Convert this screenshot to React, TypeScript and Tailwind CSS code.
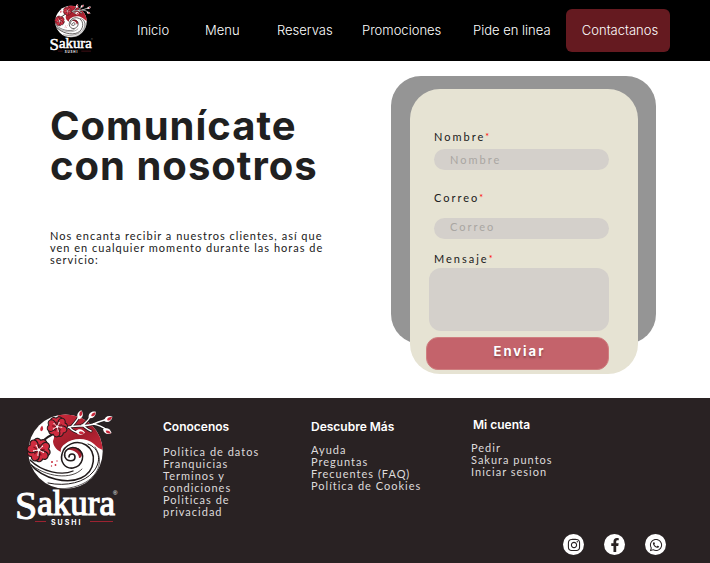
import React from "react";
import { FaFacebookF, FaInstagram, FaWhatsapp } from "react-icons/fa";

const petals = [0, 72, 144, 216, 288];

function Flower({ x, y, r, turn }: { x: number; y: number; r: number; turn: number }) {
  return (
    <g transform={`translate(${x} ${y}) rotate(${turn}) scale(${r / 10})`}>
      {petals.map((a) => (
        <path
          key={a}
          transform={`rotate(${a})`}
          d="M0 0C-4 -2 -7.4 -5.4 -5.2 -8.4C-4 -10 -1.6 -10.2 0 -8.6C1.6 -10.2 4 -10 5.2 -8.4C7.4 -5.4 4 -2 0 0Z"
          fill="#cf2c3f"
          stroke="#241a1b"
          strokeWidth="1"
        />
      ))}
      {petals.map((a) => (
        <g key={a} transform={`rotate(${a})`}>
          <path d="M0 0V-5.2" stroke="#7c1320" strokeWidth="1.2" />
          <path d="M0 0L2.2 -3.4" stroke="#fff" strokeWidth="0.7" />
          <circle cx="2.4" cy="-3.8" r="0.6" fill="#fff" />
        </g>
      ))}
      <circle r="1.3" fill="#fff" />
    </g>
  );
}

function Bud({ x, y, turn }: { x: number; y: number; turn: number }) {
  return (
    <g transform={`translate(${x} ${y}) rotate(${turn})`}>
      <path d="M0 4.4C-3.8 2 -3.4 -2.4 0 -5C3.4 -2.4 3.8 2 0 4.4Z" fill="#fff" />
      <path d="M0.4 1.2C-1.6 0 -1.2 -2.8 0.4 -4.4C2.6 -2 2.2 0.4 0.4 1.2Z" fill="#c8283a" />
    </g>
  );
}

const twigs =
  "M50 20C58 16 70 20 80 15C84 13 87 13 91 11M56 18C59 14 62 12 63 8M67 17C70 14 72 13 74 9M77 16C83 17 87 19 91 22M54 20C57 23 60 25 64 24M66 17C70 20 72 22 75 23";

function Logo({ className }: { className: string }) {
  return (
    <svg viewBox="0 0 104 120" className={className} role="img" aria-label="Sakura Sushi" fill="none">
      <defs>
        <linearGradient id="sun" x1="0" y1="0" x2="1" y2="1">
          <stop offset="0" stopColor="#d02a3c" />
          <stop offset="0.55" stopColor="#a01d2b" />
          <stop offset="1" stopColor="#cf2a3d" />
        </linearGradient>
        <clipPath id="disc">
          <circle cx="49.5" cy="43.6" r="37.2" />
        </clipPath>
      </defs>
      <g clipPath="url(#disc)">
        <rect x="10" y="5" width="80" height="80" fill="#fff" />
        <path
          d="M42 4H92V42C86 43 82 40 78 36C70 29 56 30 49 36C46 38 44 41 45 44C40 42 37 37 37 33C40 27 36 20 42 10Z"
          fill="url(#sun)"
        />
        <path d="M51 42C56 37 65 39 66 45C66 48 65 50 63 50C63 45 57 41 51 42Z" fill="#a81f2e" />
        <g stroke="#211a1b" strokeLinecap="round">
          <path
            d="M53 49C53 45 59 45 59 49C59 54 51 54 49 49C47 42 55 37 62 41C70 46 67 58 57 60C49 61 44 54 46 46C48 37 60 31 70 37C81 44 80 63 65 70C52 76 28 72 14 56"
            strokeWidth="1.6"
          />
          <path d="M72 36C84 40 86 54 77 64C69 74 51 79 32 75" strokeWidth="1" />
          <path d="M57 63C46 68 26 64 14 52" strokeWidth="1.3" />
          <path d="M66 61C56 72 30 70 13 55" strokeWidth="0.8" />
          <path d="M79 39C88 52 83 66 70 74C60 80 46 82 38 80" strokeWidth="0.7" />
        </g>
        <g fill="#c8283a">
          <circle cx="36" cy="54" r="1" />
          <circle cx="39.5" cy="57" r="0.9" />
          <circle cx="41" cy="53" r="0.7" />
          <circle cx="35.5" cy="58" r="0.7" />
        </g>
      </g>
      <g strokeLinecap="round">
        <path d="M28 32C32 28 36 27 41 24" stroke="#211a1b" strokeWidth="2" />
        <path d={twigs} stroke="#211a1b" strokeWidth="3" />
        <path d={twigs} stroke="#fff" strokeWidth="1.5" />
      </g>
      <Bud x={64} y={7} turn={15} />
      <Bud x={76} y={7} turn={50} />
      <Bud x={92} y={11} turn={62} />
      <Bud x={91} y={23} turn={115} />
      <Bud x={64} y={24} turn={100} />
      <Bud x={25} y={22} turn={10} />
      <Flower x={41.3} y={18.7} r={10} turn={-8} />
      <Flower x={22.7} y={42} r={11.5} turn={12} />
      <path d="M19 113.5H30M74 113.5H97" stroke="#9c2331" strokeWidth="1" />
      <text x="-1" y="111" fontSize="40" fill="#fff" fontFamily='"Liberation Serif", serif'>
        <tspan stroke="#fff" strokeWidth="1">
          S
        </tspan>
        <tspan y="107" fontSize="35" stroke="#fff" strokeWidth="1.2">
          akura
        </tspan>
        <tspan x="97" y="87" fontSize="6" fontFamily='"Liberation Sans", sans-serif'>
          ®
        </tspan>
        <tspan
          x="35"
          y="117"
          fontSize="7"
          fontWeight="700"
          letterSpacing="2"
          fontFamily="Inter, sans-serif"
        >
          SUSHI
        </tspan>
      </text>
    </svg>
  );
}

const navItems = ["Inicio", "Menu", "Reservas", "Promociones", "Pide en linea"];

function Header() {
  return (
    <header className="flex h-[61px] items-center bg-black pr-10 pl-[50px] font-[Inter,sans-serif] text-[13px] font-light text-white">
      <a href="#inicio" className="w-[87px] shrink-0">
        <Logo className="-mt-1 h-[51px] w-11" />
      </a>
      <nav className="grid flex-1 grid-cols-[68fr_72fr_85fr_111fr_93fr_104fr] items-center">
        {navItems.map((item) => (
          <a key={item} href="#" className="whitespace-nowrap">
            {item}
          </a>
        ))}
        <a
          href="#contacto"
          className="flex h-[43px] items-center justify-center rounded-md bg-[#651a20] pl-1 whitespace-nowrap"
        >
          Contactanos
        </a>
      </nav>
    </header>
  );
}

function Label({ htmlFor, children }: { htmlFor: string; children: string }) {
  return (
    <label htmlFor={htmlFor} className="ml-2 flex h-4 items-center text-[11px] tracking-[2px]">
      {children}
      <span className="pb-0.5 text-[9px] leading-none text-[#ff0000]">*</span>
    </label>
  );
}

const fieldClass =
  "ml-2 block h-[21px] min-w-0 rounded-full bg-[#d4d0cb] px-4 text-[11px] tracking-[2px] outline-none placeholder:text-[#a9a6a2]";

function ContactForm() {
  return (
    <div className="grid w-[265px] shrink-0 grid-cols-[minmax(0,1fr)]">
      <div className="mb-[30px] rounded-[30px] bg-[#959595] [grid-area:1/1]" />
      <form className="mt-[13px] mr-[18px] ml-[19px] flex flex-col rounded-[30px] bg-[#e6e3d3] pt-10 pr-[29px] pb-1 pl-4 [grid-area:1/1]">
        <Label htmlFor="nombre">Nombre</Label>
        <input id="nombre" type="text" placeholder="Nombre" className={`${fieldClass} mt-1`} />
        <div className="mt-5 flex flex-col">
          <Label htmlFor="correo">Correo</Label>
          <input id="correo" type="email" placeholder="Correo" className={`${fieldClass} mt-3 pb-1`} />
        </div>
        <div className="mt-3 flex flex-col">
          <Label htmlFor="mensaje">Mensaje</Label>
          <textarea
            id="mensaje"
            className="mt-px ml-[3px] h-[63px] min-w-0 resize-none rounded-xl bg-[#d4d0cb] p-3 text-[11px] outline-none"
          />
        </div>
        <button
          type="submit"
          className="mt-1.5 h-[33px] rounded-xl border border-[#cf7f80] bg-[#c4636b] pb-1 pl-1 font-[Inter,sans-serif] text-[13px] font-bold tracking-[2px] text-white [text-shadow:0_2px_2px_rgba(0,0,0,0.3)]"
        >
          Enviar
        </button>
      </form>
    </div>
  );
}

const columns = [
  {
    title: "Conocenos",
    box: "w-[148px] pt-[22px]",
    heading: "",
    list: "mt-3 w-[105px]",
    links: ["Politica de datos", "Franquicias", "Terminos y condiciones", "Politicas de privacidad"],
  },
  {
    title: "Descubre Más",
    box: "w-40 pt-[22px]",
    heading: "",
    list: "mt-2.5 w-[118px]",
    links: ["Ayuda", "Preguntas Frecuentes (FAQ)", "Política de Cookies"],
  },
  {
    title: "Mi cuenta",
    box: "w-40 pt-5",
    heading: "ml-0.5",
    list: "mt-2.5",
    links: ["Pedir", "Sakura puntos", "Iniciar sesion"],
  },
];

const socials = [
  { name: "Instagram", Icon: FaInstagram },
  { name: "Facebook", Icon: FaFacebookF },
  { name: "WhatsApp", Icon: FaWhatsapp },
];

function Footer() {
  return (
    <footer className="flex-1 bg-[#292223] text-white">
      <div className="flex h-[136px] pl-4">
        <div className="w-[147px] shrink-0 pt-2.5">
          <Logo className="h-[120px] w-[104px]" />
        </div>
        {columns.map((col) => (
          <section key={col.title} className={`shrink-0 ${col.box}`}>
            <h2
              className={`font-[Inter,sans-serif] text-[12px] leading-[14px] font-semibold ${col.heading}`}
            >
              {col.title}
            </h2>
            <ul className={`text-[11px] leading-[12px] tracking-[1px] text-[#dedbdb] ${col.list}`}>
              {col.links.map((link) => (
                <li key={link}>
                  <a href="#">{link}</a>
                </li>
              ))}
            </ul>
          </section>
        ))}
      </div>
      <div className="flex justify-end gap-5 pr-11 pb-2">
        {socials.map(({ name, Icon }) => (
          <a
            key={name}
            href="#"
            aria-label={name}
            className="flex size-[21px] items-center justify-center rounded-full bg-white text-[#292223]"
          >
            <Icon size={14} />
          </a>
        ))}
      </div>
    </footer>
  );
}

export default function App() {
  return (
    <div className="flex min-h-screen flex-col bg-white font-[Lato,sans-serif] text-[#202020]">
      <Header />
      <main className="flex justify-between pt-[15px] pr-[54px] pb-6 pl-[50px]">
        <div className="w-[290px] pt-[30px]">
          <h1 className="font-[Inter,sans-serif] text-[40px] leading-[40px] font-bold tracking-[1px]">
            Comunícate con nosotros
          </h1>
          <p className="mt-11 text-[11px] leading-[12px] tracking-[1px]">
            Nos encanta recibir a nuestros clientes, así que ven en cualquier momento durante las
            horas de servicio:
          </p>
        </div>
        <ContactForm />
      </main>
      <Footer />
    </div>
  );
}
